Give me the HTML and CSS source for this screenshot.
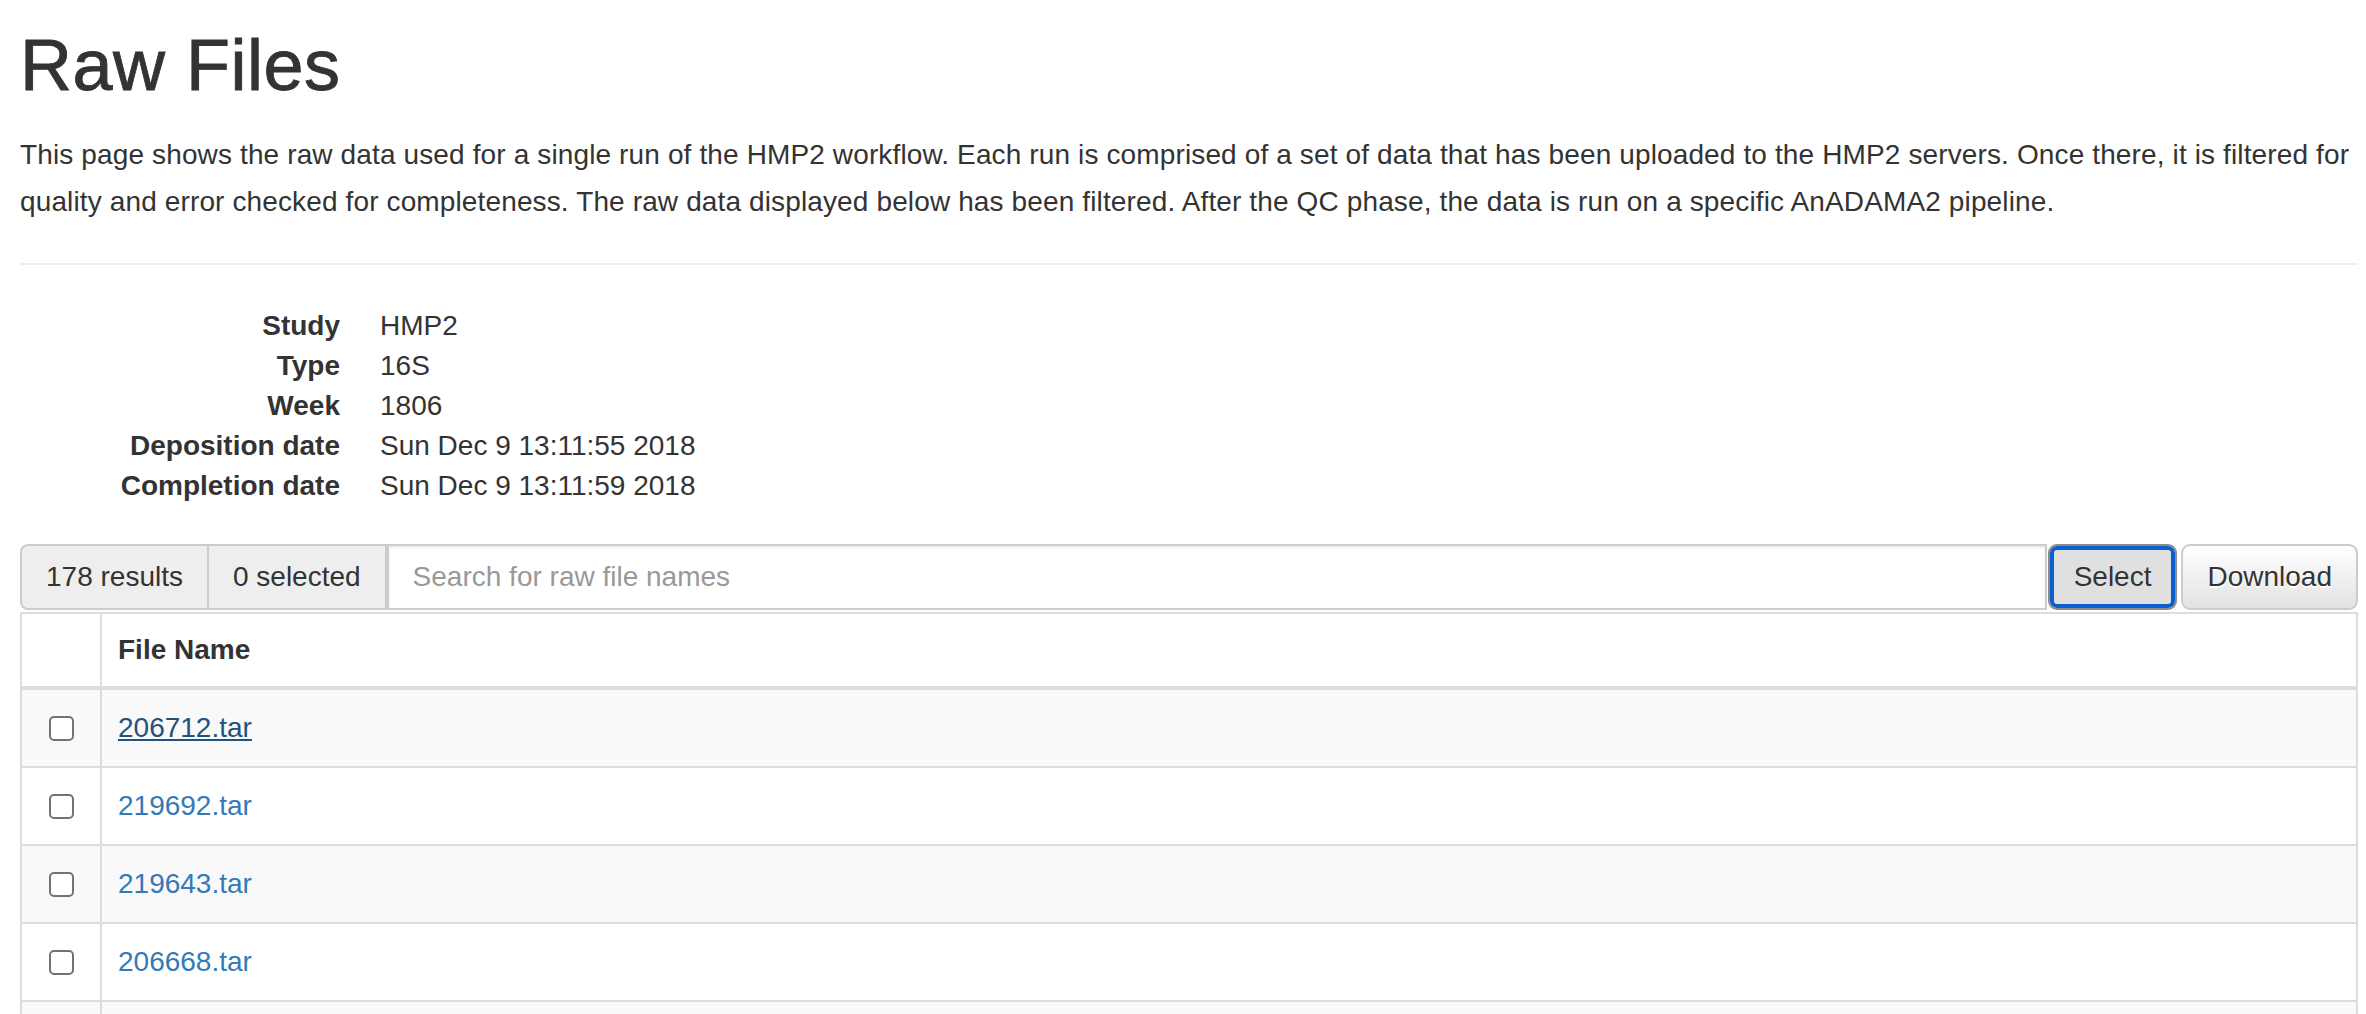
FILE: index.html
```html
<!DOCTYPE html>
<html lang="en">
<head>
<meta charset="utf-8">
<title>Raw Files</title>
<link rel="stylesheet" href="styles.css">
</head>
<body>
<div class="page">
  <h1 class="title">Raw Files</h1>
  <p class="intro">This page shows the raw data used for a single run of the HMP2 workflow. Each run is comprised of a set of data that has been uploaded to the HMP2 servers. Once there, it is filtered for quality and error checked for completeness. The raw data displayed below has been filtered. After the QC phase, the data is run on a specific AnADAMA2 pipeline.</p>
  <hr class="rule">
  <dl class="meta">
    <dt>Study</dt><dd>HMP2</dd>
    <dt>Type</dt><dd>16S</dd>
    <dt>Week</dt><dd>1806</dd>
    <dt>Deposition date</dt><dd>Sun Dec 9 13:11:55 2018</dd>
    <dt>Completion date</dt><dd>Sun Dec 9 13:11:59 2018</dd>
  </dl>
  <div class="toolbar">
    <span class="addon addon-first">178 results</span>
    <span class="addon addon-second">0 selected</span>
    <input class="search" type="text" placeholder="Search for raw file names">
    <div class="btns">
      <button class="btn btn-focus" type="button">Select</button>
      <button class="btn" type="button">Download</button>
    </div>
  </div>
  <table class="files">
    <thead>
      <tr><th class="col-check"></th><th>File Name</th></tr>
    </thead>
    <tbody>
      <tr><td class="col-check"><input class="check" type="checkbox"></td><td><a class="file-link file-link-active" href="#">206712.tar</a></td></tr>
      <tr><td class="col-check"><input class="check" type="checkbox"></td><td><a class="file-link" href="#">219692.tar</a></td></tr>
      <tr><td class="col-check"><input class="check" type="checkbox"></td><td><a class="file-link" href="#">219643.tar</a></td></tr>
      <tr><td class="col-check"><input class="check" type="checkbox"></td><td><a class="file-link" href="#">206668.tar</a></td></tr>
      <tr><td class="col-check"><input class="check" type="checkbox"></td><td><a class="file-link" href="#">206615.tar</a></td></tr>
      <tr><td class="col-check"><input class="check" type="checkbox"></td><td><a class="file-link" href="#">219701.tar</a></td></tr>
    </tbody>
  </table>
</div>
</body>
</html>
```

FILE: styles.css
```css
* {
  box-sizing: border-box;
}

html,
body {
  margin: 0;
  padding: 0;
  background: #fff;
}

body {
  font-family: "Liberation Sans", Arial, Helvetica, sans-serif;
  font-size: 28px;
  line-height: 40px;
  color: #333;
}

.page {
  padding: 0 8px 0 20px;
}

.title {
  font-size: 72px;
  font-weight: 500;
  line-height: 1.1;
  letter-spacing: 0.5px;
  -webkit-text-stroke: 0.9px #333;
  margin: 26px 0 26px;
}

.intro {
  margin: 0;
  line-height: 47px;
  letter-spacing: 0.13px;
}

.rule {
  margin: 38px 0 41px;
  height: 0;
  border: 0;
  border-top: 2px solid #eee;
}

.meta {
  display: grid;
  grid-template-columns: 320px 1fr;
  column-gap: 40px;
  margin: 0 0 38px;
}

.meta dt {
  font-weight: bold;
  text-align: right;
}

.meta dd {
  margin: 0;
}

.toolbar {
  display: flex;
  height: 66px;
}

.addon {
  display: flex;
  align-items: center;
  padding: 0 24px;
  background: #eee;
  border: 2px solid #ccc;
  color: #333;
  white-space: nowrap;
}

.addon-first {
  border-radius: 8px 0 0 8px;
}

.addon-second {
  border-left: 0;
}

.search {
  flex: 1;
  min-width: 0;
  height: 66px;
  padding: 0 24px;
  border: 2px solid #ccc;
  font: inherit;
  color: #555;
  background: #fff;
  box-shadow: inset 0 2px 2px rgba(0, 0, 0, 0.075);
  outline: none;
}

.search::placeholder {
  color: #999;
}

.btns {
  display: flex;
  gap: 4px;
  margin-left: 1px;
}

.btn {
  height: 66px;
  padding: 0 24px;
  font: inherit;
  color: #333;
  border: 2px solid #ccc;
  border-radius: 9px;
  background-color: #e8e8e8;
  background-image: linear-gradient(to bottom, #fff 0%, #e2e2e2 100%);
  text-shadow: 0 2px 0 #fff;
  cursor: pointer;
}

.btn-focus {
  background-image: none;
  background-color: #e0e0e0;
  border-color: #8c8c8c;
  box-shadow: inset 0 0 0 4px #0a60d0;
  text-shadow: none;
}

.files {
  width: 100%;
  margin-top: 2px;
  border-collapse: collapse;
  border: 2px solid #ddd;
}

.files th,
.files td {
  border: 2px solid #ddd;
  padding: 16px;
  text-align: left;
  vertical-align: middle;
}

.files th {
  line-height: 40px;
  font-weight: bold;
  border-bottom-width: 4px;
}

.files td {
  line-height: 44px;
}

.files .col-check {
  width: 80px;
  padding: 0;
}

.files tbody tr:nth-child(odd) {
  background: #f9f9f9;
}

.check {
  display: block;
  -webkit-appearance: none;
  appearance: none;
  width: 25px;
  height: 25px;
  margin: 0 auto;
  border: 2px solid #737373;
  border-radius: 5px;
  background: #fff;
}

.file-link {
  color: #337ab7;
  text-decoration: none;
}

.file-link-active {
  color: #23527c;
  text-decoration: underline;
}
```
